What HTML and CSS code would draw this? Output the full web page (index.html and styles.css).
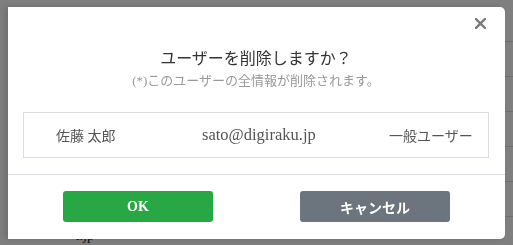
FILE: index.html
```html
<!DOCTYPE html>
<html lang="ja">
<head>
<meta charset="utf-8">
<title>ユーザー削除</title>
<link rel="stylesheet" href="styles.css">
</head>
<body>
<div class="page">
  <div class="row"></div>
  <div class="row"></div>
  <div class="row"></div>
  <div class="row"></div>
  <div class="row"></div>
  <div class="row"><div class="cell-clip"><span class="cell">sato@digiraku.jp</span></div></div>
</div>
<div class="overlay"></div>
<div class="modal">
  <button class="close" aria-label="閉じる">
    <svg width="11" height="11" viewBox="0 0 11 11"><path d="M1 1L10 10M10 1L1 10" stroke="#7a7a7a" stroke-width="2.4" stroke-linecap="square"/></svg>
  </button>
  <div class="modal-body">
    <h2 class="title">ユーザーを削除しますか？</h2>
    <p class="note">(*)このユーザーの全情報が削除されます。</p>
    <div class="info">
      <span class="name">佐藤 太郎</span>
      <span class="email">sato@digiraku.jp</span>
      <span class="role">一般ユーザー</span>
    </div>
  </div>
  <div class="modal-footer">
    <button class="btn btn-ok">OK</button>
    <button class="btn btn-cancel">キャンセル</button>
  </div>
</div>
</body>
</html>
```
FILE: styles.css
```css
* { box-sizing: border-box; }
html, body { margin: 0; padding: 0; }
body {
  width: 513px;
  height: 245px;
  overflow: hidden;
  background: #ffffff;
  font-family: "Liberation Serif", "Noto Sans CJK JP", serif;
  color: #333;
}
.page {
  padding-top: 41px;
  padding-left: 20px;
}
.row {
  height: 35px;
  border-top: 1px solid #dcdcdc;
  font-size: 14px;
}
.row:last-child { padding-top: 11px; }
.cell-clip {
  margin-left: 56px;
  width: 18px;
  overflow: hidden;
  display: flex;
  justify-content: flex-end;
  line-height: 16px;
}
.cell { color: #222; white-space: nowrap; flex: none; }
.overlay {
  position: fixed;
  inset: 0;
  background: rgba(0, 0, 0, 0.5);
}
.modal {
  position: fixed;
  left: 8px;
  top: 7px;
  width: 497px;
  height: 232px;
  background: #fff;
  border-radius: 0 5px 5px 0;
  display: flex;
  flex-direction: column;
  box-shadow: -3px 0 6px rgba(0,0,0,0.15);
}
.close {
  position: absolute;
  top: 11px;
  right: 19px;
  width: 11px;
  height: 11px;
  padding: 0;
  border: 0;
  background: none;
  display: flex;
}
.modal-body {
  padding: 40px 16px 0 15px;
  height: 168px;
  border-bottom: 1px solid #dee2e6;
}
.title {
  margin: 0;
  text-align: center;
  font-size: 16px;
  line-height: 24px;
  font-weight: normal;
  color: #333;
}
.note {
  margin: 0;
  text-align: center;
  font-size: 13px;
  line-height: 20px;
  color: #9a9a9a;
}
.info {
  margin-top: 21px;
  height: 46px;
  border: 1px solid #dcdcdc;
  display: grid;
  grid-template-columns: 146px 187px 1fr;
  align-items: center;
  padding-left: 32px;
  font-size: 14px;
  color: #555;
}
.email { font-size: 16.5px; }
.modal-footer {
  flex: 1;
  display: flex;
  justify-content: center;
  align-items: center;
  gap: 87px;
  padding-bottom: 1px;
}
.btn {
  width: 150px;
  height: 31px;
  border: 0;
  border-radius: 3px;
  color: #fff;
  font-family: "Liberation Serif", "Noto Sans CJK JP", serif;
  font-weight: bold;
  font-size: 14px;
  padding: 0;
}
.btn-ok { background: #28a745; }
.btn-cancel { background: #6c757d; }
```
